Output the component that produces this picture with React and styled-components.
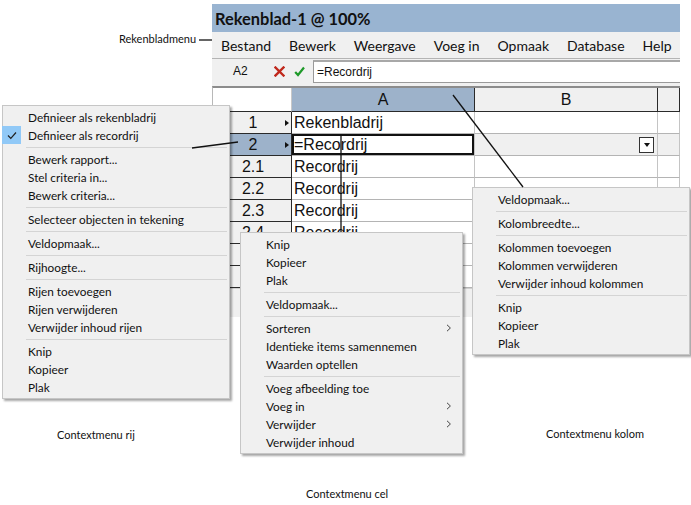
import React from "react";
import styled, { createGlobalStyle } from "styled-components";

const GlobalStyle = createGlobalStyle`
  html, body {
    margin: 0;
    padding: 0;
    background: #fff;
  }
  body {
    font-family: Lato, "Liberation Sans", sans-serif;
  }
`;

const Canvas = styled.div`
  position: relative;
  width: 691px;
  height: 505px;
  overflow: hidden;
  background: #fff;
`;

/* spreadsheet window */
const Window = styled.div`
  position: absolute;
  left: 212px;
  top: 4px;
  width: 468px;
  display: flex;
  flex-direction: column;
  background: #f0f0f0;
`;

const TitleBar = styled.div`
  height: 28px;
  background: #99b4d1;
  display: flex;
  align-items: center;
  padding-left: 3px;
  font: bold 16.4px Lato, sans-serif;
  color: #111;
`;

const MenuBar = styled.div`
  height: 26px;
  display: flex;
  align-items: center;
  gap: 18px;
  padding-left: 9px;
  font: 14px Lato, sans-serif;
  color: #111;
  border-bottom: 1px solid #b4b4b4;
`;

const FormulaBar = styled.div`
  height: 27px;
  display: flex;
  align-items: flex-start;
  font: 12px "Liberation Sans", Arial, sans-serif;
  color: #111;
`;

const CellRef = styled.div`
  width: 62px;
  padding-left: 21px;
  box-sizing: border-box;
  line-height: 25px;
`;

const FormulaIcon = styled.div`
  width: 20px;
  height: 25px;
  display: flex;
  align-items: center;
`;

const FormulaInput = styled.div`
  flex: 1;
  height: 23px;
  margin-top: 1px;
  margin-left: -1px;
  box-sizing: border-box;
  background: #fff;
  border: 1px solid #9a9a9a;
  border-right: none;
  border-top: 2px solid #a8a8a8;
  padding-left: 3px;
  line-height: 20px;
`;

const Grid = styled.div`
  display: grid;
  grid-template-columns: 79px 183px 183px 1fr;
  border-top: 2px solid #8c8c8c;
  border-left: 1px solid #b8b8b8;
  background: #fff;
  font: 16px "Liberation Sans", Arial, sans-serif;
  color: #111;
`;

const HeadCell = styled.div`
  box-sizing: border-box;
  height: 24px;
  display: flex;
  align-items: center;
  justify-content: center;
  background: ${(p) => (p.$selected ? "#9db2ca" : p.$corner ? "#fff" : "#f0f0f0")};
  border-right: 1px solid ${(p) => (p.$corner ? "#c8c8c8" : "#2a2a2a")};
  border-bottom: 1px solid #2a2a2a;
`;

const RowHead = styled.div`
  box-sizing: border-box;
  height: 22px;
  display: flex;
  align-items: center;
  background: ${(p) => (p.$selected ? "#9db2ca" : "#f0f0f0")};
  border-right: 1px solid #2a2a2a;
  border-bottom: 1px solid #2a2a2a;
`;

const RowLabel = styled.span`
  flex: 1;
  padding-left: 10px;
  text-align: center;
`;

const RowMarker = styled.span`
  width: 8px;
  display: flex;
  justify-content: center;
  &::before {
    content: "";
    display: ${(p) => (p.$show ? "block" : "none")};
    border-left: 4px solid #111;
    border-top: 3.5px solid transparent;
    border-bottom: 3.5px solid transparent;
  }
`;

const DataCell = styled.div`
  box-sizing: border-box;
  height: 22px;
  display: flex;
  align-items: center;
  justify-content: ${(p) => (p.$end ? "flex-end" : "flex-start")};
  padding: 0 2px;
  background: ${(p) => (p.$shaded ? "#f0f0f0" : "#fff")};
  border-right: 1px solid #c4c4c4;
  border-bottom: 1px solid #b4b4b4;
  box-shadow: ${(p) => (p.$active ? "inset 0 0 0 2px #111" : "none")};
  white-space: nowrap;
  overflow: hidden;
`;

const DropButton = styled.span`
  width: 15px;
  height: 16px;
  box-sizing: border-box;
  margin-right: 1px;
  background: #fff;
  border: 1px solid #333;
  display: flex;
  align-items: center;
  justify-content: center;
  &::before {
    content: "";
    border-top: 4px solid #111;
    border-left: 3.5px solid transparent;
    border-right: 3.5px solid transparent;
  }
`;

const StatusStrip = styled.div`
  height: 28px;
  background: #f0f0f0;
  border-top: 1px solid #d0d0d0;
`;

/* context menus */
const Menu = styled.div`
  position: absolute;
  left: ${(p) => p.$x}px;
  top: ${(p) => p.$y}px;
  width: ${(p) => p.$w}px;
  box-sizing: border-box;
  padding: 2px 0;
  background: #f0f0f0;
  border: 1px solid #c6c6c6;
  box-shadow: 2px 2px 2px rgba(0, 0, 0, 0.35);
  font: 11.8px Lato, sans-serif;
  color: #111;
`;

const Item = styled.div`
  height: 18px;
  display: flex;
  align-items: center;
  padding-right: 10px;
`;

const CheckArea = styled.span`
  width: 19px;
  height: 18px;
  margin-left: -1px;
  margin-right: 7px;
  display: flex;
  align-items: center;
  justify-content: center;
  background: ${(p) => (p.$checked ? "#91c9f7" : "transparent")};
`;

const ItemText = styled.span`
  flex: 1;
  white-space: nowrap;
`;

const Separator = styled.div`
  height: 1px;
  margin: 3px 2px 2px 23px;
  background: #d4d4d4;
`;

const Caption = styled.div`
  position: absolute;
  left: ${(p) => p.$x}px;
  top: ${(p) => p.$y}px;
  font: 11px Lato, sans-serif;
  color: #111;
  white-space: nowrap;
`;

const Callouts = styled.svg`
  position: absolute;
  left: 0;
  top: 0;
  pointer-events: none;
`;

const Check = () => (
  <svg width="10" height="9" viewBox="0 0 10 9">
    <path d="M1 4.5 L3.8 7.3 L9 1.5" fill="none" stroke="#222" strokeWidth="1.2" />
  </svg>
);

const Chevron = () => (
  <svg width="6" height="8" viewBox="0 0 6 8">
    <path d="M1 0.8 L4.4 4 L1 7.2" fill="none" stroke="#444" strokeWidth="1" />
  </svg>
);

const CancelIcon = () => (
  <svg width="11" height="11" viewBox="0 0 11 11">
    <path d="M1.5 1.5 L9.5 9.5 M9.5 1.5 L1.5 9.5" stroke="#c0281c" strokeWidth="2.4" strokeLinecap="square" />
  </svg>
);

const AcceptIcon = () => (
  <svg width="11" height="11" viewBox="0 0 11 11">
    <path d="M1.2 6 L4 9 L10 1.5" fill="none" stroke="#1f9a2a" strokeWidth="2.2" />
  </svg>
);

const ContextMenu = ({ x, y, w, items }) => (
  <Menu $x={x} $y={y} $w={w}>
    {items.map((it, i) =>
      it === "-" ? (
        <Separator key={i} />
      ) : (
        <Item key={i}>
          <CheckArea $checked={it.checked}>{it.checked && <Check />}</CheckArea>
          <ItemText>{it.label}</ItemText>
          {it.sub && <Chevron />}
        </Item>
      )
    )}
  </Menu>
);

const rowMenu = [
  { label: "Definieer als rekenbladrij" },
  { label: "Definieer als recordrij", checked: true },
  "-",
  { label: "Bewerk rapport..." },
  { label: "Stel criteria in..." },
  { label: "Bewerk criteria..." },
  "-",
  { label: "Selecteer objecten in tekening" },
  "-",
  { label: "Veldopmaak..." },
  "-",
  { label: "Rijhoogte..." },
  "-",
  { label: "Rijen toevoegen" },
  { label: "Rijen verwijderen" },
  { label: "Verwijder inhoud rijen" },
  "-",
  { label: "Knip" },
  { label: "Kopieer" },
  { label: "Plak" },
];

const cellMenu = [
  { label: "Knip" },
  { label: "Kopieer" },
  { label: "Plak" },
  "-",
  { label: "Veldopmaak..." },
  "-",
  { label: "Sorteren", sub: true },
  { label: "Identieke items samennemen" },
  { label: "Waarden optellen" },
  "-",
  { label: "Voeg afbeelding toe" },
  { label: "Voeg in", sub: true },
  { label: "Verwijder", sub: true },
  { label: "Verwijder inhoud" },
];

const columnMenu = [
  { label: "Veldopmaak..." },
  "-",
  { label: "Kolombreedte..." },
  "-",
  { label: "Kolommen toevoegen" },
  { label: "Kolommen verwijderen" },
  { label: "Verwijder inhoud kolommen" },
  "-",
  { label: "Knip" },
  { label: "Kopieer" },
  { label: "Plak" },
];

const rows = [
  { label: "1", marker: true, a: "Rekenbladrij" },
  { label: "2", marker: true, selected: true, a: "=Recordrij" },
  { label: "2.1", a: "Recordrij" },
  { label: "2.2", a: "Recordrij" },
  { label: "2.3", a: "Recordrij" },
  { label: "2.4", a: "Recordrij" },
  { label: "" },
  { label: "" },
];

const menuBarItems = ["Bestand", "Bewerk", "Weergave", "Voeg in", "Opmaak", "Database", "Help"];

const App = () => {
  return (
    <>
      <GlobalStyle />
      <Canvas>
        <Window>
          <TitleBar>Rekenblad-1 @ 100%</TitleBar>
          <MenuBar>
            {menuBarItems.map((m) => (
              <span key={m}>{m}</span>
            ))}
          </MenuBar>
          <FormulaBar>
            <CellRef>A2</CellRef>
            <FormulaIcon>
              <CancelIcon />
            </FormulaIcon>
            <FormulaIcon>
              <AcceptIcon />
            </FormulaIcon>
            <FormulaInput>=Recordrij</FormulaInput>
          </FormulaBar>
          <Grid>
            <HeadCell $corner />
            <HeadCell $selected>A</HeadCell>
            <HeadCell>B</HeadCell>
            <HeadCell />
            {rows.map((r, i) => (
              <React.Fragment key={i}>
                <RowHead $selected={r.selected}>
                  <RowLabel>{r.label}</RowLabel>
                  <RowMarker $show={r.marker} />
                </RowHead>
                <DataCell $active={r.selected}>{r.a}</DataCell>
                <DataCell $shaded={r.selected} $end>
                  {r.selected && <DropButton />}
                </DataCell>
                <DataCell $shaded={r.selected} />
              </React.Fragment>
            ))}
          </Grid>
          <StatusStrip />
        </Window>

        <ContextMenu x={2} y={105} w={228} items={rowMenu} />
        <ContextMenu x={240} y={232} w={223} items={cellMenu} />
        <ContextMenu x={472} y={187} w={218} items={columnMenu} />

        <Callouts width="691" height="505">
          <g stroke="#111" strokeWidth="1.3" fill="none">
            <line x1="199" y1="40" x2="212" y2="40" />
            <line x1="192" y1="148" x2="238" y2="142" />
            <line x1="341" y1="135" x2="341" y2="232" />
            <line x1="453" y1="95" x2="523" y2="187" />
          </g>
        </Callouts>

        <Caption $x={119} $y={32}>Rekenbladmenu</Caption>
        <Caption $x={57} $y={428}>Contextmenu rij</Caption>
        <Caption $x={306} $y={487}>Contextmenu cel</Caption>
        <Caption $x={546} $y={427}>Contextmenu kolom</Caption>
      </Canvas>
    </>
  );
};

export default App;
